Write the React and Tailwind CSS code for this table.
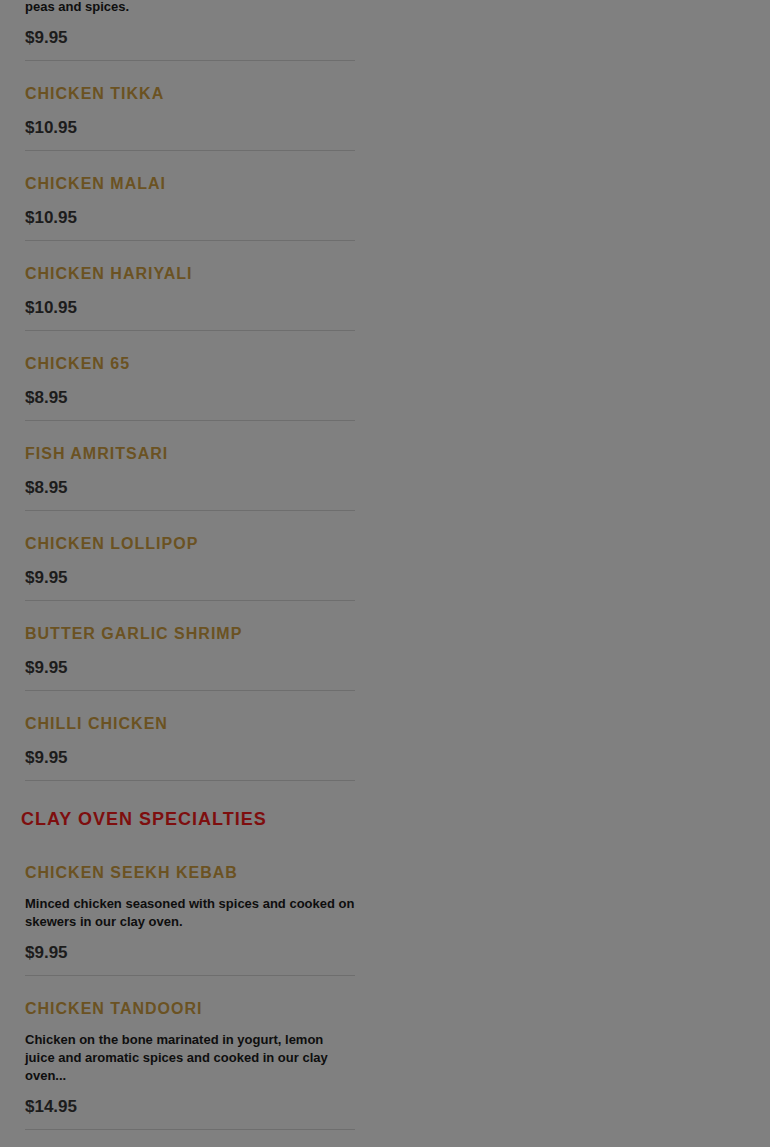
const appetizers = [
  { name: 'Chicken Tikka', price: '$10.95' },
  { name: 'Chicken Malai', price: '$10.95' },
  { name: 'Chicken Hariyali', price: '$10.95' },
  { name: 'Chicken 65', price: '$8.95' },
  { name: 'Fish Amritsari', price: '$8.95' },
  { name: 'Chicken Lollipop', price: '$9.95' },
  { name: 'Butter Garlic Shrimp', price: '$9.95' },
  { name: 'Chilli Chicken', price: '$9.95' },
];

const clayOven = [
  {
    name: 'Chicken Seekh Kebab',
    desc: 'Minced chicken seasoned with spices and cooked on skewers in our clay oven.',
    price: '$9.95',
  },
  {
    name: 'Chicken Tandoori',
    desc: 'Chicken on the bone marinated in yogurt, lemon juice and aromatic spices and cooked in our clay oven...',
    price: '$14.95',
  },
];

const MenuItem = ({ item }) => (
  <div className="pt-[23px] pb-[12px] border-b border-[#6e6e6e]">
    <h3 className="text-[16px] leading-[20px] font-bold uppercase tracking-[1px] text-[#6b5222]">
      {item.name}
    </h3>
    {item.desc ? (
      <p className="mt-[12px] text-[13px] leading-[18px] font-bold text-[#0e0e0e]">{item.desc}</p>
    ) : null}
    <div className={`${item.desc ? 'mt-[12px]' : 'mt-[14px]'} text-[17px] leading-[20px] font-bold text-[#1c1c1c]`}>
      {item.price}
    </div>
  </div>
);

export default function App() {
  return (
    <div
      className="min-h-[1147px] bg-[#808080] overflow-hidden"
      style={{ fontFamily: '"Liberation Sans", Arial, sans-serif' }}
    >
      <div className="ml-[25px] w-[330px]">
        {/* samosa, cut off at the top */}
        <div className="pb-[12px] border-b border-[#6e6e6e]">
          <p className="mt-[-20px] text-[13px] leading-[18px] font-bold text-[#0e0e0e]">
            Crispy pastry filled with potatoes, green
            <br />
            peas and spices.
          </p>
          <div className="mt-[12px] text-[17px] leading-[20px] font-bold text-[#1c1c1c]">$9.95</div>
        </div>

        {appetizers.map((item) => (
          <MenuItem key={item.name} item={item} />
        ))}

        <h2 className="-ml-[4px] pt-[27px] pb-[10px] text-[18px] leading-[22px] font-bold uppercase tracking-[1px] text-[#7e0e0e]">
          Clay Oven Specialties
        </h2>

        {clayOven.map((item) => (
          <MenuItem key={item.name} item={item} />
        ))}
      </div>
    </div>
  );
}
